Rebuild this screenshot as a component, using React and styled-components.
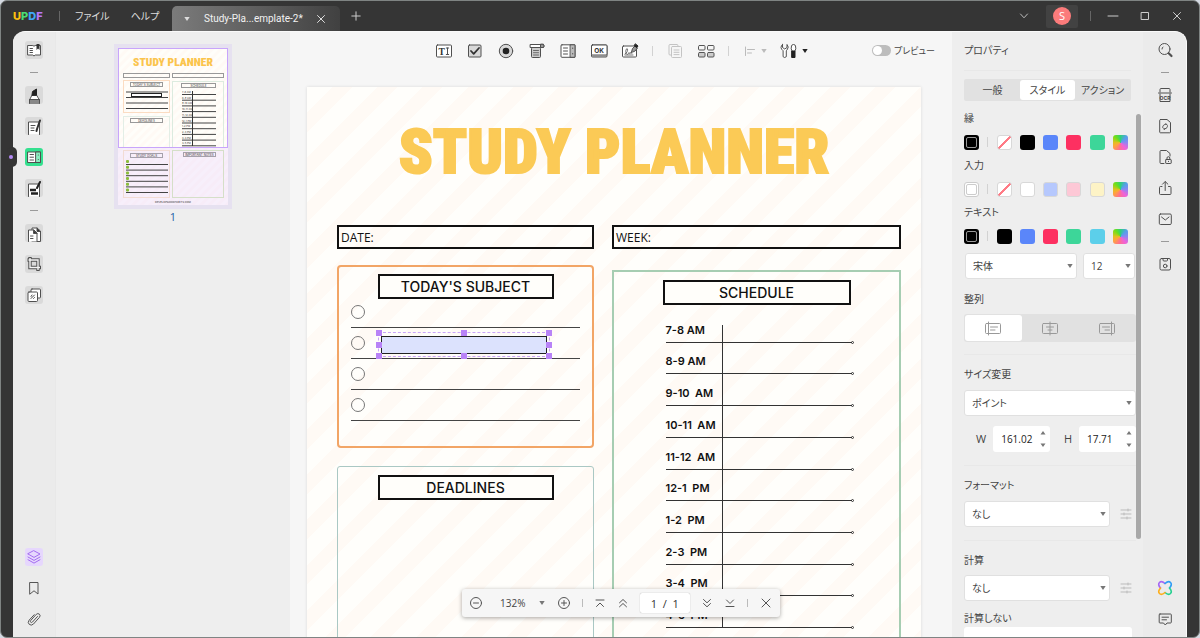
import React, { useState } from "react";
import styled, { createGlobalStyle } from "styled-components";


const GlobalStyle = createGlobalStyle`
  *, *::before, *::after {
    box-sizing: border-box;
  }

  body {
    margin: 0;
    background: #d5d9e2;
    color: #444;
    font-family: "Open Sans", "Noto Sans CJK JP", sans-serif;
    font-size: 11px;
    line-height: 16px;
    font-feature-settings: "palt";
  }

  button, input, select {
    font: inherit;
    font-feature-settings: inherit;
    color: inherit;
    margin: 0;
    padding: 0;
    border: 0;
    background: none;
  }

  svg {
    display: block;
    flex: none;
  }
`

const Window = styled.div`
  height: 100vh;
  display: flex;
  flex-direction: column;
  padding: 0 12px;
  overflow: hidden;
  background: #353535;
  border: 1px solid #7f8483;
  border-radius: 7px;
`

/* title bar */

const TitleBar = styled.header`
  height: 30px;
  flex: none;
  display: flex;
  align-items: center;
  color: #ddd;
`

const Logo = styled.span`
  font-family: Inter, sans-serif;
  font-size: 11px;
  font-weight: 800;
  width: 46px;
`

const Letter = styled.span`
  color: ${props => props.color};
`

const Divider = styled.span`
  width: 1px;
  height: ${props => props.size || 10}px;
  flex: none;
  background: ${props => props.color || "#d2d2d2"};
`

const MenuItem = styled.button`
  margin-left: ${props => props.gap}px;
  font-size: 10px;
`

const Tab = styled.div`
  display: flex;
  align-items: center;
  align-self: flex-end;
  width: 168px;
  height: 25px;
  margin-left: 13px;
  padding: 0 14px 0 12px;
  gap: 10px;
  border-radius: 5px 5px 0 0;
  background: linear-gradient(90deg, #7b7b7b, #414141);

  span {
    flex: 1;
    text-align: center;
    font-family: Roboto, sans-serif;
    font-size: 10px;
    color: #f2f2f2;
    white-space: nowrap;
  }
`

const WindowControls = styled.div`
  margin-left: auto;
  display: flex;
  align-items: center;
  gap: 12px;
`

const AvatarButton = styled.button`
  display: flex;
  align-items: center;
  justify-content: center;
  width: 32px;
  height: 23px;
  border-radius: 2px;
  background: #424242;

  span {
    width: 18px;
    height: 18px;
    line-height: 18px;
    border-radius: 50%;
    background: #fb7b7b;
    color: #fff;
  }
`

const ControlButton = styled.button`
  width: 20px;
  height: 20px;
  margin-left: ${props => props.gap || 0}px;
  display: flex;
  align-items: center;
  justify-content: center;
`

/* workspace */

const Workspace = styled.div`
  position: relative;
  flex: 1;
  min-height: 0;
  display: flex;
`

const RoundedArea = styled.div`
  flex: 1;
  min-width: 0;
  display: flex;
  overflow: hidden;
  background: #f6f6f6;
  border: solid #fafafa;
  border-width: 1px 1px 0 0;
  border-radius: 12px 12px 0 0;
`

const RailKnob = styled.span`
  position: absolute;
  left: -6px;
  top: 116px;
  width: 10px;
  height: 20px;
  border-radius: 5px;
  background: #353535;

  &::after {
    content: "";
    position: absolute;
    left: 2px;
    top: 8px;
    width: 4px;
    height: 4px;
    border-radius: 50%;
    background: #b48af5;
  }
`

const Rail = styled.nav`
  width: ${props => props.width}px;
  flex: none;
  display: flex;
  flex-direction: column;
  align-items: center;
  gap: 13px;
  padding: 9px 0 9px;
  background: #ebebeb;
`

const RailButton = styled.button`
  width: 18px;
  height: 18px;
  flex: none;
  border-radius: 3px;
  background: ${props => props.tint || "none"};
`

const Dash = styled.span`
  width: 8px;
  height: 1px;
  background: #9a9a9a;
`

const Spacer = styled.div`
  flex: 1;
`

const ThumbPanel = styled.aside`
  width: 235px;
  flex: none;
  display: flex;
  flex-direction: column;
  align-items: center;
  padding-top: 12px;
  background: #eee;
  border-left: 1px solid #e8e8e8;
  color: #1d5fa8;
`

const ThumbFrame = styled.div`
  padding: 4px;
  background: #e6e1f0;
`

const CanvasArea = styled.main`
  position: relative;
  flex: 1;
  min-width: 0;
  display: flex;
  flex-direction: column;
  overflow: hidden;
  background: #f6f6f6;
`

const Toolbar = styled.div`
  display: grid;
  grid-template-columns: 1fr auto 1fr;
  align-items: center;
  flex: none;
  height: 37px;
`

const Tools = styled.div`
  grid-column: 2;
  display: flex;
  align-items: center;
  gap: 13px;
`

const ToolButton = styled.button`
  display: flex;
  align-items: center;
  gap: 4px;
`

const Preview = styled.label`
  display: flex;
  align-items: center;
  justify-self: end;
  gap: 3px;
  padding-right: 17px;
  font-size: 9px;

  input {
    appearance: none;
    width: 19px;
    height: 11px;
    border-radius: 6px;
    padding: 1px;
    background: #bdbdbd;
  }

  input::before {
    content: "";
    display: block;
    width: 9px;
    height: 9px;
    border-radius: 50%;
    background: #fff;
  }

  input:checked::before {
    margin-left: auto;
  }
`

const PageScroll = styled.div`
  flex: 1;
  min-height: 0;
  overflow: hidden;
  padding: 18px 31px 0 17px;
`

/* document page */

const Page = styled.article`
  min-height: 860px;
  padding-top: 28px;
  color: #111;
  background: repeating-linear-gradient(135deg, #fffefb 0 18px, #fffaf5 18px 32px);
  box-shadow: 0 0 3px rgba(0, 0, 0, 0.12);
`

const PageTitle = styled.h1`
  margin: 0 0 36px;
  text-align: center;
  white-space: nowrap;
  color: #fbca56;
  font-family: "Roboto Condensed", "DejaVu Sans Condensed", sans-serif;
  font-size: 62px;
  font-weight: 900;
  line-height: 74px;
  -webkit-text-stroke: 2px #fbca56;
`

const Columns = styled.div`
  display: grid;
  grid-template-columns: 257fr 289fr;
  column-gap: 18px;
  padding: 0 20px 0 30px;
`

const PageColumn = styled.div`
  display: flex;
  flex-direction: column;
  gap: 18px;
  padding-top: ${props => props.top}px;
`

const LineBox = styled.div`
  height: 24px;
  border: 2px solid #111;
  padding: 3px 2px;
  font-size: 12px;
`

const Card = styled.section`
  display: flex;
  flex-direction: column;
  align-items: center;
  padding: ${props => props.top || 7}px 12px 17px;
  min-height: ${props => props.height || 0}px;
  border: ${props => props.line || 2}px solid ${props => props.color};
  border-radius: ${props => props.round || 0}px;
`

const CardTitle = styled.h2`
  width: ${props => props.width}px;
  height: 25px;
  margin: 0;
  border: 2px solid #111;
  background: #fffefa;
  text-align: center;
  font-family: Inter, sans-serif;
  font-size: 14px;
  font-weight: 500;
  line-height: 21px;
`

const CheckLine = styled.div`
  position: relative;
  align-self: stretch;
  margin-bottom: 8px;
  padding-bottom: 8px;
  border-bottom: 1px solid #444;

  &:first-of-type {
    margin-top: 6px;
  }
`

const Ring = styled.span`
  display: block;
  width: 14px;
  height: 14px;
  border: 1px solid #777;
  border-radius: 50%;
`

const Selection = styled.div`
  position: absolute;
  left: 27px;
  right: 30px;
  top: -4px;
  height: 25px;
  padding: 3px 2px;
  border: 1px dashed #c9a4f8;

  input {
    display: block;
    width: 100%;
    height: 18px;
    border: 1px solid #222;
    background: #dce2fd;
  }
`

const Handle = styled.i`
  position: absolute;
  left: ${props => props.x}%;
  top: ${props => props.y}%;
  width: 6px;
  height: 6px;
  transform: translate(-50%, -50%);
  background: #b883f7;
`

const Hours = styled.ul`
  position: relative;
  display: grid;
  grid-auto-rows: 1fr;
  width: 186px;
  height: 317px;
  margin: 6px 0 0 4px;
  padding: 0;
  list-style: none;

  &::before {
    content: "";
    position: absolute;
    left: 56px;
    top: 14px;
    bottom: 0;
    width: 1px;
    background: #333;
  }
`

const Hour = styled.li`
  display: flex;
  align-items: flex-end;
  position: relative;
  padding-bottom: 4px;
  border-bottom: 1px solid #333;
  font-family: Inter, sans-serif;
  font-size: 11px;
  font-weight: 600;
  white-space: pre;

  &::after {
    content: "";
    position: absolute;
    right: -2px;
    bottom: -2px;
    width: 3px;
    height: 3px;
    border: 1px solid #333;
    border-radius: 50%;
  }
`

/* floating page bar */

const PageBar = styled.div`
  position: absolute;
  left: 50%;
  bottom: 20px;
  transform: translateX(-50%);
  display: flex;
  align-items: center;
  justify-content: space-between;
  width: 318px;
  height: 28px;
  padding: 0 7px;
  border-radius: 3px;
  background: #f6f6f6;
  box-shadow: 0 1px 4px rgba(0, 0, 0, 0.35);
`

const ZoomLevel = styled.button`
  display: flex;
  align-items: center;
  gap: 14px;
  padding-left: 6px;
  font-size: 10px;
`

const PageNumber = styled.input`
  width: 50px;
  height: 20px;
  border-radius: 2px;
  background: #fff;
  text-align: center;
  color: #333;
  box-shadow: 0 0 1px #999;
`

/* properties */

const Properties = styled.aside`
  width: 191px;
  flex: none;
  display: flex;
  flex-direction: column;
  overflow: hidden;
  background: #eee;
`

const PropHeader = styled.div`
  flex: none;
  padding: 10px 12px 9px;

  h2 {
    margin: 0;
    padding-bottom: 12px;
    border-bottom: 1px solid #e8e8e8;
    font-size: 10px;
    line-height: 16px;
    font-weight: 400;
  }
`

const Tabs = styled.div`
  display: grid;
  grid-template-columns: repeat(3, 1fr);
  height: 22px;
  margin-top: 8px;
  padding: 1px;
  border-radius: 2px;
  background: #e1e1e1;
`

const TabButton = styled.button`
  font-size: 10px;
  border-radius: 3px;
  background: ${props => props.$active ? "#fff" : "none"};
`

const PropScroll = styled.div`
  flex: 1;
  min-height: 0;
  display: flex;
  justify-content: space-between;
  padding: 0 2px 0 12px;
`

const PropBody = styled.div`
  width: 172px;
`

const ScrollThumb = styled.div`
  width: 5px;
  height: 425px;
  margin-top: 4px;
  border-radius: 3px;
  background: #a8a8a8;
`

const Label = styled.label`
  display: block;
  font-size: 10px;
  margin-top: ${props => props.top || 0}px;
`

const Swatches = styled.div`
  display: flex;
  align-items: center;
  justify-content: space-between;
  margin: 8px 8px 7px 0;
  height: 16px;
`

const Swatch = styled.button`
  width: 15px;
  height: 15px;
  border-radius: 3px;
  border: 1px solid ${props => props.edge || "transparent"};
  background: ${props => props.$fill};
  background-origin: border-box;
`

const CurrentSwatch = styled(Swatch)`
  padding: 1px;

  &::after {
    content: "";
    display: block;
    height: 11px;
    border: 1px solid ${props => props.$ring};
    border-radius: 2px;
  }
`

const Row = styled.div`
  display: flex;
  align-items: center;
  gap: ${props => props.gap || 0}px;
  margin-top: ${props => props.top || 0}px;
  padding: 0 ${props => props.side || 0}px;
`

const SizeRow = styled(Row)`
  justify-content: space-between;
  padding: 0 0 0 12px;
`

const SelectBox = styled.div`
  position: relative;
  flex: ${props => props.width ? "none" : 1};
  width: ${props => props.width ? props.width + "px" : "auto"};

  select {
    appearance: none;
    width: 100%;
    height: 26px;
    padding: 0 7px;
    border: 1px solid #e0e0e0;
    border-radius: 3px;
    background: #fff;
    font-size: 10px;
  }

  svg {
    position: absolute;
    right: 4px;
    top: 10px;
    pointer-events: none;
  }
`

const AlignGroup = styled.div`
  display: grid;
  grid-template-columns: repeat(3, 1fr);
  height: 28px;
  margin-top: 7px;
  padding: 1px;
  border-radius: 3px;
  background: #e1e1e1;
`

const AlignButton = styled.button`
  display: flex;
  align-items: center;
  justify-content: center;
  border-radius: 3px;
  background: ${props => props.$active ? "#fff" : "none"};
`

const Rule = styled.hr`
  margin: ${props => props.top}px 0 11px;
  border: 0;
  border-top: 1px solid #e8e8e8;
`

const SizeBox = styled.span`
  display: flex;
  align-items: center;
  width: 57px;
  height: 26px;
  padding: 0 4px 0 8px;
  border-radius: 3px;
  background: #fff;

  input {
    flex: 1;
    min-width: 0;
    width: 30px;
    font-size: 10px;
    color: #222;
  }
`

const NoCalcBox = styled.div`
  height: 26px;
  margin: 1px 4px 0 0;
  border-radius: 3px;
  background: #fff;
`

const Svg = ({ w = 18, h = 18, color = "#505050", children }) => (
  <svg width={w} height={h} viewBox={`0 0 ${w} ${h}`} fill="none" stroke={color} strokeLinecap="round" strokeLinejoin="round" aria-hidden="true">
    {children}
  </svg>
)

const Caret = ({ color = "#777" }) => (
  <svg width="6" height="6" viewBox="0 0 6 6" aria-hidden="true"><path d="M0.3 1h5.4L3 5z" fill={color} /></svg>
)

const leftIcons = {
  reader: <><path d="M3 4.500h4.800L9 5.200l1.200-.7h5.300V14h-5.200L9 15l-1.300-1H3z" fill="#fff" /><path d="M5 7.500h2.500M5 9.500h2.500M5 11.500h2.500" /><path d="M11.500 3h3v6L13 7.500 11.500 9z" fill="#333" stroke="none" /></>,
  marker: <><path d="M4 17.500l1-5.500 2.500-3.500h4L14 12l1 5.500z" fill="#fff" stroke="none" /><path d="M4.500 17.500V14L7 9h4.500l3 5v3.500" /><path d="M7 9l.5-3.500 4-2.500v6z" fill="#222" stroke="#222" /><path d="M5 13.500h9V18H5z" fill="#888" stroke="none" /><path d="M4.500 13.500h10" /></>,
  edit: <><path d="M3.500 17.500V5h11v12.500" fill="#fff" /><path d="M6 8.500h4M6 11h3M6 13.500h3" /><path d="M15 3.500L12 12l-.5 2" stroke="#333" strokeWidth="2" /></>,
  form: <><path d="M3 4h12.500v10.500H3z" fill="#fff" /><path d="M11 4h4.500v10.500H11z" fill="#8bedc0" /><path d="M5 6.500h3.500M5 9.200h3.500M5 12h3.500" /><path d="M13.300 7v.1M13.300 11.500v.1" /></>,
  redact: <><path d="M3.500 17.500V5h11v12.500" fill="#fff" /><path d="M5 11h6M6 14.500h7" stroke="#222" strokeWidth="2.500" strokeLinecap="butt" /><path d="M15 3l-3 6" stroke="#222" strokeWidth="2" /></>,
  pages: <><path d="M7 14V4h5l3.500 3v10.500H7" fill="#fff" /><path d="M3.500 17.500V6H9l3 3v8.500" fill="#fff" /><path d="M12 4v3.500h3.500M8.500 6v3.500H12" fill="#333" /><path d="M5.500 12h2.500M5.500 14.500h2.500" /></>,
  crop: (
    <>
      <g strokeWidth="3.400" strokeLinecap="butt" strokeLinejoin="miter"><path d="M5 2v10.500h11M2.500 5H13v11" /></g>
      <g stroke="#f4f4f4" strokeWidth="1.400" strokeLinecap="butt" strokeLinejoin="miter"><path d="M5 3v9.500h10M3.500 5H13v10" /></g>
    </>
  ),
  batch: <><rect x="6" y="3" width="9.500" height="9" rx="1" fill="#fff" /><rect x="3" y="6" width="9.500" height="9.500" rx="1" fill="#fff" /><path d="M6 12.500L9.500 9M6 10.500L7 9M8.500 12.500l1-1" /></>,
}

const topRail = [
  ["リーダー", "reader"], null, ["注釈", "marker"], ["編集", "edit"], ["フォーム", "form"],
  ["墨消し", "redact"], null, ["ページ", "pages"], ["クロップ", "crop"], ["バッチ", "batch"],
]

const rightIcons = [
  ["検索", <><circle cx="8.500" cy="8" r="5.500" /><path d="M6 8a2.300 2.300 0 0 1 1-2" /><path d="M12.700 12.200l2.800 2.800" strokeWidth="2.200" /></>],
  null,
  ["OCR", <><path d="M4 6V3.500Q4 2.500 5 2.500h8q1 0 1 1V6M2.500 7h13M4 8v7.500h10V8" /><text x="9" y="13.700" textAnchor="middle" fontSize="5" fontWeight="700" fontFamily="Inter" fill="#444" stroke="none">OCR</text></>],
  ["変換", <><path d="M4.500 2.500H11l3.500 3V15q0 .8-.8.8H4.500q-.8 0-.8-.8V3.300q0-.8.8-.8z" /><path d="M6.700 10.500a2.600 2.600 0 0 1 2.600-3h1.500l-1-1M11.500 8.700a2.600 2.600 0 0 1-2.600 3H7.500l1 1" /></>],
  ["保護", <><path d="M8 15.500H5q-1 0-1-1v-11q0-1 1-1h5.500l3.500 3V8" /><rect x="9.700" y="11.500" width="5.500" height="4" rx=".5" /><path d="M11 11.300V10q0-1.300 1.400-1.300T13.800 10v1.300M12.500 13.300v.3" /></>],
  ["共有", <><path d="M6 7.500H4.500q-1 0-1 1v6q0 1 1 1H14q1 0 1-1v-6q0-1-1-1h-1.500M9.200 11.500V2.800M6.500 5.200l2.700-2.700 2.700 2.700" /></>],
  ["メール", <><rect x="3.300" y="4" width="12" height="10.500" rx="1.200" /><path d="M5.500 7l3.800 3L13 7" /></>],
  null,
  ["保存", <><rect x="4" y="3.500" width="10.500" height="11.500" rx="1.500" /><circle cx="9.200" cy="11" r="1.800" /><path d="M7 3.500V5q0 1 1 1h2.500q1 0 1-1V3.500" /></>],
]

const formTools = [
  ["テキスト", <><rect x="1.500" y="3" width="15" height="12" rx="1" fill="#fff" /><text x="3.500" y="12.500" fontSize="9.500" fontWeight="700" fontFamily="Liberation Serif" fill="#333" stroke="none">T</text><path d="M11.300 6h2.400M11.300 12.500h2.400M12.500 6v6.500" /></>],
  ["チェックボックス", <><rect x="2.500" y="3" width="12.500" height="12" rx="1" fill="#d8d8d8" /><path d="M5 9l2.700 2.800L13 6" stroke="#333" strokeWidth="1.800" /></>],
  ["ラジオボタン", <><circle cx="9" cy="9" r="6.700" fill="#d8d8d8" /><circle cx="9" cy="9" r="3.300" fill="#222" stroke="none" /></>],
  ["ドロップダウン", <><rect x="3.500" y="5.500" width="9" height="10" rx="1" fill="#ccc" /><path d="M2.500 2.500h13q1.200 1.500 0 3h-13z" fill="#fff" /><path d="M12.500 2.500v3h3L16 4l-.5-1.500z" fill="#999" /><path d="M5.500 8.500h5M5.500 10.700h5M5.500 13h5" strokeWidth=".8" /></>],
  ["リスト", <><rect x="2" y="2.800" width="14" height="12.500" rx="1" fill="#fff" /><path d="M11.500 2.800H16v12.500h-4.500z" fill="#bbb" /><path d="M4.500 6h4M4.500 9h4M4.500 12h4M13.700 6v.5M13.700 11.500v.5" /></>],
  ["ボタン", <><rect x="1.500" y="3" width="15.500" height="12" rx="1" fill="#ccc" /><rect x="1.500" y="3" width="15.500" height="10" rx="1" fill="#fff" /><text x="9.200" y="10.500" textAnchor="middle" fontSize="6.500" fontWeight="700" fontFamily="Inter" fill="#333" stroke="none">OK</text></>],
  ["署名", <><rect x="1.500" y="4" width="14" height="11" rx="1" fill="#fff" /><path d="M4 12c2-1 3-3.500 2.500-5S4 8.500 5 11s2.500 1 3-.5c.5 2 1.500 1.500 2-.5l.8 1.500M4 13h8" strokeWidth=".8" /><path d="M10.500 10l1-3.500L14 4l2.500 2L14 9z" fill="#999" /><path d="M14.500 2l2.500 2-1 1.500L13.500 4z" fill="#222" stroke="#222" /></>],
]

const alignIcons = [
  ["左揃え", <><rect x="1.500" y="2.500" width="15" height="10" rx="1" /><path d="M4.500 1v13M6.500 6h7M6.500 9h4.500" /></>],
  ["中央揃え", <><rect x="1.500" y="2.500" width="15" height="10" rx="1" /><path d="M9 1v13M5.500 6h7M7 9h4" /></>],
  ["右揃え", <><rect x="1.500" y="2.500" width="15" height="10" rx="1" /><path d="M13.500 1v13M4.500 6h7M7 9h4.500" /></>],
]

const none = "linear-gradient(135deg, #fff 46%, #ff7b86 46% 54%, #fff 54%)"
const rainbow = "conic-gradient(from 0deg, #2fd07a, #54a0e8 45deg, #8c86f2 90deg, #f062d8 140deg, #ff7090 190deg, #ffa53c 240deg, #e0c020 270deg, #6be01a 320deg, #2fd07a)"

const palettes = [
  { label: "縁", current: "#000", ring: "#999", colors: [none, "#000", "#5a86fa", "#fd3061", "#3dd699"] },
  { label: "入力", current: "#fff", ring: "#ccc", colors: [none, "#fff", "#b6c8fd", "#fdc8d6", "#fdf3c6"] },
  { label: "テキスト", current: "#000", ring: "#999", colors: ["#000", "#5a86fa", "#fd3061", "#3dd699", "#5ccfea"] },
]

const light = [none, "#fff", "#b6c8fd", "#fdc8d6", "#fdf3c6"]

const hours = ["7-8 AM", "8-9 AM", "9-10  AM", "10-11  AM", "11-12  AM", "12-1  PM", "1-2  PM", "2-3  PM", "3-4  PM", "4-5  PM"]

const handles = [[0, 0], [50, 0], [100, 0], [0, 50], [100, 50], [0, 100], [50, 100], [100, 100]]

function Thumbnail() {
  const box = (x, y, w, h, stroke) => <rect x={x} y={y} width={w} height={h} fill="none" stroke={stroke} />
  const text = (x, y, value, size = 3) => (
    <text x={x} y={y} fontSize={size} fontFamily="Inter" textAnchor="middle" fill="#333">{value}</text>
  )
  return (
    <svg width="110" height="157" viewBox="0 0 110 157" role="img" aria-label="1">
      <defs>
        <pattern id="stripes" width="6" height="6" patternUnits="userSpaceOnUse" patternTransform="rotate(45)">
          <rect width="6" height="6" fill="#fffefa" />
          <rect width="3" height="6" fill="#fffaf5" />
        </pattern>
      </defs>
      <rect width="110" height="157" fill="url(#stripes)" />
      <text x="55" y="17.500" textAnchor="middle" fontSize="11.500" fontWeight="900" fontFamily="Roboto Condensed" fill="#fbc44c">STUDY PLANNER</text>
      {box(5.500, 25.500, 46, 4, "#999")}
      {box(54.500, 25.500, 51, 4, "#999")}
      {box(5.500, 32.500, 46, 32, "#fbdcc2")}
      {box(12.500, 34.500, 32, 4, "#999")}
      {text(28.500, 38, "TODAY'S SUBJECT")}
      <path d="M8 44h42M8 49.500h42M8 55h42M8 60.500h42" stroke="#444" />
      <rect x="13.500" y="45.500" width="30" height="3" fill="#fff" stroke="#222" />
      {box(5.500, 68.500, 46, 31, "#e3eee6")}
      {box(12.500, 70.500, 32, 4, "#999")}
      {text(28.500, 74, "DEADLINES")}
      {box(54.500, 33.500, 51, 66, "#dcebdf")}
      {box(63.500, 35.500, 34, 4, "#999")}
      {text(80.500, 39, "SCHEDULE")}
      {hours.map((hour, i) => (
        <g key={hour}>
          <text x="64" y={45 + i * 5.700} fontSize="2.500" fontFamily="Inter" fill="#333">{hour}</text>
          <path d={`M64 ${46.500 + i * 5.700}h34`} stroke="#444" />
        </g>
      ))}
      <path d="M74.500 43v55" stroke="#333" />
      <rect y="99" width="110" height="58" fill="#e3c8ff" fillOpacity=".28" />
      {box(5.500, 102.500, 46, 47, "#f2dcd4")}
      {box(12.500, 105.500, 32, 4, "#a5a0aa")}
      {text(28.500, 109, "STUDY GOALS")}
      {[0, 1, 2, 3, 4, 5].map(i => (
        <g key={i}>
          <rect x="8" y={112 + i * 5.700} width="3" height="3" rx="1" fill="#8cbd3c" />
          <path d={`M8 ${116.500 + i * 5.600}h42`} stroke="#444" />
        </g>
      ))}
      {box(54.500, 102.500, 51, 47, "#d5dfc8")}
      {box(65.500, 104.500, 32, 4, "#a5a0aa")}
      {text(81.500, 108, "IMPORTANT NOTES")}
      {text(55, 155, "DEVELOPGOODHABITS.COM", 2.600)}
      <rect x=".5" y=".5" width="109" height="99" fill="none" stroke="#c8a5fb" />
    </svg>
  )
}

function Planner() {
  return (
    <Page>
      <PageTitle>STUDY PLANNER</PageTitle>
      <Columns>
        <LineBox>DATE:</LineBox>
        <LineBox>WEEK:</LineBox>
        <PageColumn top={16}>
          <Card color="#f2a566" round={4}>
            <CardTitle width={176}>TODAY'S SUBJECT</CardTitle>
            {[0, 1, 2, 3].map(i => (
              <CheckLine key={i}>
                <Ring />
                {i === 1 && (
                  <Selection>
                    <input aria-label="テキストフィールド" />
                    {handles.map(([x, y]) => <Handle key={`${x}-${y}`} x={x} y={y} />)}
                  </Selection>
                )}
              </CheckLine>
            ))}
          </Card>
          <Card color="#aac8c4" line={1} top={8} height={300} round={3}>
            <CardTitle width={176}>DEADLINES</CardTitle>
          </Card>
        </PageColumn>
        <PageColumn top={21}>
          <Card color="#a6cdb2" top={8} height={480}>
            <CardTitle width={188}>SCHEDULE</CardTitle>
            <Hours>
              {hours.map(hour => <Hour key={hour}>{hour}</Hour>)}
            </Hours>
          </Card>
        </PageColumn>
      </Columns>
    </Page>
  )
}

function Select({ id, label, value, width }) {
  return (
    <SelectBox width={width}>
      <select id={id} aria-label={label} defaultValue={value}>
        <option>{value}</option>
      </select>
      <Caret />
    </SelectBox>
  )
}

function Size({ id, name, value }) {
  return (
    <Row gap={7}>
      <label htmlFor={id}>{name}</label>
      <SizeBox>
        <input id={id} defaultValue={value} />
        <Svg w={6} h={18} color="none">
          <path d="M.5 4.500L3 1l2.500 3.500zM.5 13.500L3 17l2.500-3.500z" fill="#777" />
        </Svg>
      </SizeBox>
    </Row>
  )
}

const SettingsIcon = () => (
  <Svg w={12} h={12} color="#bbb">
    <path d="M1 2h10M1 6h10M1 10h10M8 1v2M4 5v2M7 9v2" />
  </Svg>
)

function PropertiesPanel() {
  const [tab, setTab] = useState("スタイル")
  const [align, setAlign] = useState("左揃え")
  return (
    <Properties>
      <PropHeader>
        <h2>プロパティ</h2>
        <Tabs>
          {["一般", "スタイル", "アクション"].map(name => (
            <TabButton key={name} $active={tab === name} onClick={() => setTab(name)}>{name}</TabButton>
          ))}
        </Tabs>
      </PropHeader>
      <PropScroll>
        <PropBody>
          {palettes.map(p => (
            <React.Fragment key={p.label}>
              <Label as="div">{p.label}</Label>
              <Swatches>
                <CurrentSwatch aria-label={p.label} $fill={p.current} edge={p.current === "#fff" ? "#ccc" : ""} $ring={p.ring} />
                <Divider />
                {p.colors.map(c => (
                  <Swatch key={c} aria-label={c} $fill={c} edge={light.includes(c) ? "#d8d8d8" : ""} />
                ))}
                <Swatch aria-label="カラー" $fill={rainbow} />
              </Swatches>
            </React.Fragment>
          ))}
          <Row top={9} gap={6} side={1}>
            <Select label="フォント" value="宋体" />
            <Select label="フォントサイズ" value="12" width={52} />
          </Row>
          <Label as="div" top={12}>整列</Label>
          <AlignGroup>
            {alignIcons.map(([name, icon]) => (
              <AlignButton key={name} aria-label={name} $active={align === name} onClick={() => setAlign(name)}>
                <Svg h={15} color="#999">{icon}</Svg>
              </AlignButton>
            ))}
          </AlignGroup>
          <Rule top={12} />
          <Label htmlFor="unit">サイズ変更</Label>
          <Row top={8}>
            <Select id="unit" value="ポイント" />
          </Row>
          <SizeRow top={10}>
            <Size id="width" name="W" value="161.02" />
            <Size id="height" name="H" value="17.71" />
          </SizeRow>
          <Rule top={13} />
          <Label htmlFor="format">フォーマット</Label>
          <Row top={8} gap={10}>
            <Select id="format" value="なし" width={146} />
            <SettingsIcon />
          </Row>
          <Rule top={13} />
          <Label htmlFor="calc">計算</Label>
          <Row top={7} gap={10}>
            <Select id="calc" value="なし" width={146} />
            <SettingsIcon />
          </Row>
          <Label as="div" top={9}>計算しない</Label>
          <NoCalcBox />
        </PropBody>
        <ScrollThumb />
      </PropScroll>
    </Properties>
  )
}

export default function App() {
  return (
    <>
      <GlobalStyle />
      <Window>
        <TitleBar>
          <Logo>
            <Letter color="#fdc010">U</Letter>
            <Letter color="#4ade73">P</Letter>
            <Letter color="#3fa7f5">D</Letter>
            <Letter color="#b877fa">F</Letter>
          </Logo>
          <Divider color="#666" />
          <MenuItem gap={15}>ファイル</MenuItem>
          <MenuItem gap={21}>ヘルプ</MenuItem>
          <Tab>
            <Caret color="#ddd" />
            <span>Study-Pla...emplate-2*</span>
            <Svg w={10} h={10} color="#ddd"><path d="M1.500 1.500l7 7M8.500 1.500l-7 7" /></Svg>
          </Tab>
          <ControlButton aria-label="新しいタブ" gap={6}>
            <Svg w={10} h={10} color="#ccc"><path d="M5 .8v8.400M.8 5h8.400" /></Svg>
          </ControlButton>
          <WindowControls>
            <ControlButton aria-label="タブ一覧"><Svg w={10} h={10} color="#bbb"><path d="M1.500 3L5 6.800 8.500 3" /></Svg></ControlButton>
            <AvatarButton aria-label="S"><span>S</span></AvatarButton>
            <Divider color="#666" />
            <ControlButton aria-label="最小化"><Svg w={12} h={10} color="#ccc"><path d="M1 5h10" /></Svg></ControlButton>
            <ControlButton aria-label="最大化"><Svg w={10} h={10} color="#ccc"><rect x="1.500" y="1.500" width="7" height="7" /></Svg></ControlButton>
            <ControlButton aria-label="閉じる"><Svg w={10} h={10} color="#ccc"><path d="M1.500 1.500l7 7M8.500 1.500l-7 7" /></Svg></ControlButton>
          </WindowControls>
        </TitleBar>
        <Workspace>
          <RoundedArea>
            <Rail width={42}>
              {topRail.map((item, i) => item
                ? (
                  <RailButton key={i} aria-label={item[0]} tint={item[1] === "form" ? "#34e08f" : "#dadada"}>
                    <Svg>{leftIcons[item[1]]}</Svg>
                  </RailButton>
                )
                : <Dash key={i} />
              )}
              <Spacer />
              <RailButton aria-label="レイヤー" tint="#e6d7fd">
                <Svg color="#a46cf0"><path d="M9 2.800l6 3.200-6 3.400L3 6zM3 9l6 3.400L15 9M3 11.700l6 3.400 6-3.400" /></Svg>
              </RailButton>
              <RailButton aria-label="ブックマーク">
                <Svg color="#555"><path d="M5 3.500h8V15l-4-3.200L5 15z" /></Svg>
              </RailButton>
              <RailButton aria-label="添付ファイル">
                <Svg color="#555"><path d="M12.500 6.500l-5 5.500q-1 1-1.800.2t.1-1.800l5.400-6q1.700-1.600 3.200-.2t0 3.200l-6 6.700q-2.200 2-4.200.2t0-4.200l5-5.400" /></Svg>
              </RailButton>
            </Rail>
            <ThumbPanel>
              <ThumbFrame><Thumbnail /></ThumbFrame>
              1
            </ThumbPanel>
            <CanvasArea>
              <Toolbar>
                <Tools>
                  {formTools.map(([name, icon]) => (
                    <ToolButton key={name} aria-label={name}><Svg>{icon}</Svg></ToolButton>
                  ))}
                  <Divider />
                  <ToolButton aria-label="コピー">
                    <Svg color="#c4c4c4"><path d="M5 13H4q-1 0-1-1V3.500q0-1 1-1h7q1 0 1 1" /><rect x="5.500" y="4.500" width="10" height="11" rx="1" /><path d="M8 8h5M8 10.300h5M8 12.600h5" /></Svg>
                  </ToolButton>
                  <ToolButton aria-label="複数作成">
                    <Svg color="#555"><rect x="1.500" y="3.500" width="6.500" height="4.500" rx="1" /><rect x="10.500" y="3.500" width="6.500" height="4.500" rx="1" /><rect x="1.500" y="10.500" width="6.500" height="4.500" rx="1" fill="#ccc" /><rect x="10.500" y="10.500" width="6.500" height="4.500" rx="1" fill="#ccc" /></Svg>
                  </ToolButton>
                  <Divider />
                  <ToolButton aria-label="配置">
                    <Svg w={15} color="#bbb"><path d="M3.500 5v8.500M5.500 7.500h7M5.500 11h4" /></Svg>
                    <Caret color="#bbb" />
                  </ToolButton>
                  <ToolButton aria-label="ツール">
                    <Svg>
                      <path d="M2.500 2.500v3L4.700 7 7 5.500v-3q2.500 2.500 0 5.500l-.7.700v6q-1.600 1.600-3.200 0v-6q-4-3-.6-6.200z" fill="#fff" />
                      <path d="M12 9q-1.500-2-.5-5 .3-1.500 2-1.500t2 1.500q1 3-.5 5" fill="#fff" />
                      <rect x="12" y="9" width="3" height="6.500" fill="#222" stroke="#222" />
                    </Svg>
                    <Caret color="#222" />
                  </ToolButton>
                </Tools>
                <Preview>
                  <input type="checkbox" />
                  プレビュー
                </Preview>
              </Toolbar>
              <PageScroll>
                <Planner />
              </PageScroll>
              <PageBar>
                <Svg w={14} h={14} color="#555"><circle cx="7" cy="7" r="5.500" /><path d="M4.500 7h5" /></Svg>
                <ZoomLevel>132% <Caret /></ZoomLevel>
                <Svg w={14} h={14} color="#555"><circle cx="7" cy="7" r="5.500" /><path d="M4.500 7h5M7 4.500v5" /></Svg>
                <Divider color="#bbb" size={8} />
                <Svg w={12} h={12} color="#555"><path d="M2 3h8M2.500 9.500L6 6l3.500 3.500" /></Svg>
                <Svg w={12} h={12} color="#555"><path d="M2.500 5.800L6 2.500l3.500 3.300M2.500 9.800L6 6.500l3.500 3.300" /></Svg>
                <PageNumber aria-label="ページ" defaultValue="1  /  1" />
                <Svg w={12} h={12} color="#555"><path d="M2.500 2.500L6 5.800l3.500-3.300M2.500 6.500L6 9.800l3.500-3.300" /></Svg>
                <Svg w={12} h={12} color="#555"><path d="M2 9.500h8M2.500 3L6 6.500 9.500 3" /></Svg>
                <Divider color="#bbb" size={8} />
                <Svg w={14} h={14} color="#555"><path d="M3 3l8 8M11 3l-8 8" /></Svg>
              </PageBar>
            </CanvasArea>
            <PropertiesPanel />
            <Rail width={43}>
              {rightIcons.map((item, i) => item
                ? <RailButton key={i} aria-label={item[0]}><Svg>{item[1]}</Svg></RailButton>
                : <Dash key={i} />
              )}
              <Spacer />
              <RailButton aria-label="AI">
                <svg width="18" height="18" viewBox="0 0 18 18" fill="none" strokeWidth="1.600" strokeLinecap="round">
                  <path d="M4.500 9Q1.500 5.500 3.500 3.500T9 4.500" stroke="#a566f5" />
                  <path d="M9 4.500Q12.500 1.500 14.500 3.500T13.500 9" stroke="#2f9df5" />
                  <path d="M13.500 9Q16.500 12.500 14.500 14.500T9 13.500" stroke="#25d090" />
                  <path d="M9 13.500Q5.500 16.500 3.500 14.500T4.500 9" stroke="#fdae1c" />
                </svg>
              </RailButton>
              <RailButton aria-label="コメント">
                <Svg><path d="M4 4h10.500q.8 0 .8.800v7.400q0 .8-.8.800H11l-1.700 2-1.800-2H4q-.8 0-.8-.8V4.800Q3.200 4 4 4z" /><path d="M6 7.200h6.500M6 9.800h4.500" /></Svg>
              </RailButton>
            </Rail>
          </RoundedArea>
          <RailKnob />
        </Workspace>
      </Window>
    </>
  )
}
